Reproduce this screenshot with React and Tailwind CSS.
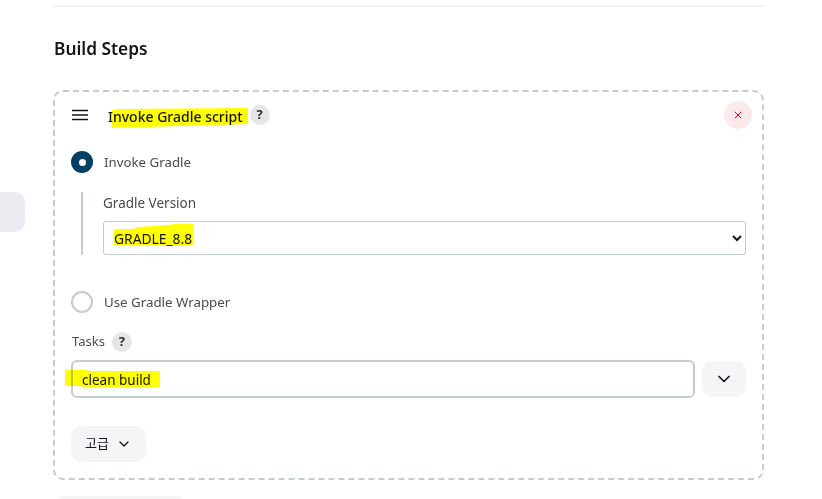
import { ChevronDown, X } from 'lucide-react'

const font = { fontFamily: '"Noto Sans", "Noto Sans CJK KR", sans-serif' }

function Help() {
  return (
    <span className="size-5 rounded-full bg-[#e6e6e9] grid place-items-center text-[13px] font-bold text-[#2a2a35]">?</span>
  )
}

function Radio({ checked, label }) {
  return (
    <div className="flex items-center gap-[11px] h-[22px]">
      {checked ? (
        <span className="size-[22px] rounded-full bg-[#033f63] grid place-items-center">
          <span className="size-[7px] rounded-full bg-white" />
        </span>
      ) : (
        <span className="size-[22px] rounded-full border-2 border-[#c3ccd1] bg-white" />
      )}
      <span className="pt-[2px] text-[13.3px] text-[#4a4a52]">{label}</span>
    </div>
  )
}

export default function App() {
  return (
    <div style={font} className="relative w-[822px] h-[499px] overflow-hidden bg-white flex">
      <aside className="w-[53px] shrink-0 pt-[192px]">
        <div className="w-[25px] h-[40px] bg-[#ebebf2] rounded-r-[10px]" />
      </aside>

      <main className="w-[711px] pt-[5px]">
        <div className="h-[2px] bg-[#f3f3f7]" />
        <h2 className="mt-[31px] h-[22px] leading-[22px] pl-[1px] text-[17.3px] font-semibold text-[#14141f]">Build Steps</h2>

        <section className="mt-[30px] h-[390px] border-2 border-dashed border-[#c3ccd1] rounded-[10px] pl-[16px] pr-[15px] pt-[9px]">
          <div className="flex items-center h-[28px]">
            <svg width="16" height="12" viewBox="0 0 16 12" className="ml-[1px] text-[#14141f]">
              <path d="M0 1.5h16M0 6h16M0 10.5h16" stroke="currentColor" strokeWidth="1.5" />
            </svg>
            <span className="ml-[20px] pt-[2px] text-[14px] font-medium text-[#14141f]">Invoke Gradle script</span>
            <span className="ml-[7px]"><Help /></span>
            <button className="ml-auto -mr-[5px] size-[28px] rounded-full bg-[#fbe9ec] grid place-items-center text-[#e6002e]">
              <X size={12} strokeWidth={2} />
            </button>
          </div>

          <div className="mt-[22px]"><Radio checked label="Invoke Gradle" /></div>

          <div className="mt-[19px] ml-[10px] border-l-2 border-[#c3ccd1] pl-[20px] h-[63px]">
            <label className="block h-[29px] text-[13.5px] leading-[22px] text-[#4a4a52]">Gradle Version</label>
            <select className="block w-[643px] h-[34px] border border-[#c3ccd1] rounded-[3px] bg-white pl-[6px] text-[13.8px] text-[#14141f] outline-none">
              <option>GRADLE_8.8</option>
            </select>
          </div>

          <div className="mt-[36px]"><Radio label="Use Gradle Wrapper" /></div>

          <div className="mt-[18px] flex items-center gap-[7px] h-[22px]">
            <span className="pl-[1px] text-[13px] text-[#4a4a52]">Tasks</span>
            <Help />
          </div>

          <div className="mt-[7px] flex items-center gap-[7px]">
            <input
              readOnly
              value="clean build"
              className="w-[624px] h-[38px] border-2 border-[#c3ccd1] rounded-[6px] pl-[9px] pr-[9px] pt-[2px] text-[13.5px] text-[#14141f] outline-none"
            />
            <button className="w-[44px] h-[36px] rounded-[10px] bg-[#f5f5f8] grid place-items-center text-[#14141f]">
              <ChevronDown size={20} strokeWidth={2} />
            </button>
          </div>

          <button className="mt-[28px] w-[75px] h-[36px] rounded-[10px] bg-[#f5f5f8] flex items-center justify-center gap-[7px] text-[13px] text-[#14141f]">
            고급 <ChevronDown size={16} strokeWidth={2} />
          </button>
        </section>

        <div className="mt-[16px] ml-[2px] w-[132px] h-[36px] rounded-[10px] bg-[#f5f5f8]" />
      </main>

      {/* marker strokes someone drew over the screenshot */}
      <svg width="822" height="499" className="absolute inset-0 pointer-events-none mix-blend-multiply">
        <path d="M112 110l6-1 130-1v16l-136 4z" fill="#ffff00" />
        <path d="M114 229h20l2-2 20-1 20-2 17 0v21h-79z" fill="#ffff00" />
        <path d="M65 370h22v1h73v16H82v-1H65z" fill="#ffff00" />
      </svg>
    </div>
  )
}
